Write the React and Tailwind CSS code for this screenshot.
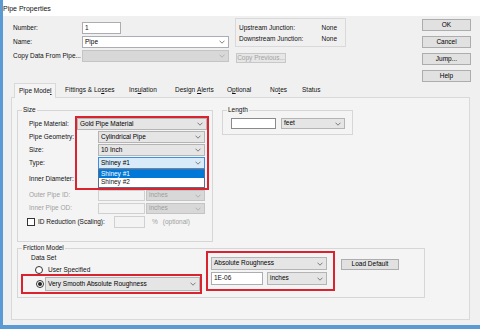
import React from "react";

const RED = "border-[#d9232e]";

function Chevron({ muted = false }) {
  return (
    <svg width="6" height="4" viewBox="0 0 6 4" className="ml-auto shrink-0">
      <polyline
        points="0.5,0.7 3,3.2 5.5,0.7"
        fill="none"
        stroke={muted ? "#a9a9a9" : "#606060"}
        strokeWidth="0.8"
      />
    </svg>
  );
}

function Combo({ value = "", tone = "gray", className = "" }) {
  const tones = {
    gray: "bg-[#e5e5e5] border-[#b4b4b4] text-black",
    white: "bg-white border-[#abadb3] text-black",
    focus: "bg-[#d9ebf9] border-[#3c8fdc] text-black",
    off: "bg-[#d8d8d8] border-[#c4c4c4] text-[#9d9d9d]",
  };
  return (
    <div
      className={`flex shrink-0 items-center border pl-[2px] pr-[3px] ${tones[tone]} ${className}`}
    >
      <span className="whitespace-nowrap">{value}</span>
      <Chevron muted={tone === "off"} />
    </div>
  );
}

function Field({ value = "", off = false, className = "" }) {
  return (
    <div
      className={`flex shrink-0 items-center border pl-[2px] ${off ? "bg-[#f3f3f3] border-[#d0d0d0]" : "bg-white"} ${className}`}
    >
      {value}
    </div>
  );
}

function Btn({ children, off = false, className = "" }) {
  return (
    <button
      type="button"
      className={`flex shrink-0 items-center justify-center border leading-none ${off ? "bg-[#e6e6e6] border-[#c8c8c8] text-[#a3a3a3]" : "bg-[#e1e1e1] border-[#adadad] text-black"} ${className}`}
    >
      {children}
    </button>
  );
}

function Radio({ on = false, className = "" }) {
  return (
    <span
      className={`flex h-[8px] w-[8px] shrink-0 items-center justify-center rounded-full border border-[#333] bg-white ${className}`}
    >
      {on && <span className="h-[4px] w-[4px] rounded-full bg-[#222]" />}
    </span>
  );
}

const tabs = [
  { w: "w-[66px] pl-[9px]", label: <>Fittings &amp; Lo<u>s</u>ses</> },
  { w: "w-[45px] pl-[7px]", label: <>Ins<u>u</u>lation</> },
  { w: "w-[54px] pl-[8px]", label: <>{"Design\u00a0"}<u>A</u>lerts</> },
  { w: "w-[41px] pl-[6px]", label: <>O<u>p</u>tional</> },
  { w: "w-[33px] pl-[8px]", label: <>No<u>t</u>es</> },
  { w: "w-[35px] pl-[7px]", label: <>Status</> },
];

export default function App() {
  return (
    <div className="flex h-[329px] w-[480px] flex-col overflow-hidden border-b-[4px] border-l-[3px] border-[#5b9bd5] bg-[#f0f0f0] font-['Liberation_Sans',Arial,sans-serif] text-[6.5px] leading-none text-[#111]">
      {/* title bar */}
      <div className="flex h-[16px] shrink-0 items-center bg-white text-[7px] text-[#111]">
        Pipe Properties
      </div>

      {/* header controls */}
      <div className="flex h-[66px] shrink-0">
        <div className="ml-[10px] flex w-[216px] flex-col gap-[2px] pt-[6px]">
          <div className="flex h-[12px] items-center">
            <span className="w-[69px]">Number:</span>
            <Field value="1" className="h-[12px] w-[39px] border-[#abadb3]" />
          </div>
          <div className="flex h-[12px] items-center">
            <span className="w-[69px]">Name:</span>
            <Combo value="Pipe" tone="white" className="h-[12px] w-[147px]" />
          </div>
          <div className="flex h-[12px] items-center">
            <span className="w-[69px] whitespace-nowrap">Copy Data From Pipe...</span>
            <Combo tone="off" className="h-[12px] w-[147px]" />
          </div>
        </div>

        <div className="ml-[6px] w-[111px] pt-[2px]">
          <div className="h-[29px] border border-[#d9d9d9] px-[3px] pt-[4px]">
            <div className="flex h-[11px] items-center justify-between pr-[5px]">
              <span>Upstream Junction:</span>
              <span>None</span>
            </div>
            <div className="flex h-[11px] items-center justify-between pr-[5px]">
              <span>Downstream Junction:</span>
              <span>None</span>
            </div>
          </div>
          <Btn off className="ml-[1px] mt-[6px] h-[10px] w-[50px]">
            Copy Previous...
          </Btn>
        </div>

        <div className="ml-[76px] flex w-[49px] flex-col gap-[5px] pt-[3px]">
          <Btn className="h-[12px] w-[49px]">OK</Btn>
          <Btn className="h-[12px] w-[49px]">Cancel</Btn>
          <Btn className="h-[12px] w-[49px]">Jump...</Btn>
          <Btn className="h-[12px] w-[49px]">Help</Btn>
        </div>
      </div>

      {/* tab strip */}
      <div className="relative z-10 ml-[8px] flex h-[15px] shrink-0 items-end">
        <div className="ml-[3px] mb-[-1px] flex h-[15px] w-[42px] items-center border-x border-t border-[#d9d9d9] bg-[#f4f4f4] pl-[4px]">
          Pipe Mode<u>l</u>
        </div>
        {tabs.map((t, i) => (
          <div key={i} className={`flex h-[13px] items-center whitespace-nowrap ${t.w}`}>
            {t.label}
          </div>
        ))}
      </div>

      {/* tab page */}
      <div className="ml-[8px] h-[223px] w-[459px] shrink-0 border border-[#d9d9d9] bg-[#f4f4f4] pl-[5px] pt-[8px]">
        <div className="flex items-start">
          <fieldset className="w-[196px] border border-[#d6d6d6] pb-[13px]">
            <legend className="ml-[4px] px-[1px] leading-[8px]">Size</legend>
            <div className="mt-[2px] flex">
              <div className="ml-[11px] w-[46px] whitespace-nowrap pt-[2px]">
                {["Pipe Material:", "Pipe Geometry:", "Size:", "Type:"].map((t) => (
                  <div key={t} className="flex h-[13px] items-center">
                    {t}
                  </div>
                ))}
                <div className="flex h-[18px] items-center">Inner Diameter:</div>
              </div>
              <div className={`w-[134px] border-2 ${RED}`}>
                <Combo value="Gold Pipe Material" className="h-[12px] w-[130px]" />
                <div className="ml-[21px] mt-[1px] flex flex-col gap-[1px]">
                  <Combo value="Cylindrical Pipe" className="h-[12px] w-[107px]" />
                  <Combo value="10 Inch" className="h-[12px] w-[107px]" />
                  <Combo value="Shiney #1" tone="focus" className="h-[12px] w-[107px]" />
                </div>
                <div className="ml-[21px] h-[19px] w-[107px] border border-[#5a6e88] bg-white">
                  <div className="flex h-[8px] items-center bg-[#0078d7] pl-[2px] text-white">
                    Shiney #1
                  </div>
                  <div className="flex h-[9px] items-center pl-[2px]">Shiney #2</div>
                </div>
              </div>
            </div>

            <div className="ml-[11px] flex h-[11px] items-center text-[#a0a0a0]">
              <span className="w-[69px]">Outer Pipe ID:</span>
              <Field off className="h-[11px] w-[47px]" />
              <Combo tone="off" value="inches" className="ml-[1px] h-[11px] w-[59px]" />
            </div>
            <div className="ml-[11px] mt-[2px] flex h-[11px] items-center text-[#a0a0a0]">
              <span className="w-[69px]">Inner Pipe OD:</span>
              <Field off className="h-[11px] w-[47px]" />
              <Combo tone="off" value="inches" className="ml-[1px] h-[11px] w-[59px]" />
            </div>
            <div className="ml-[9px] mt-[2px] flex h-[12px] items-center">
              <span className="h-[8px] w-[8px] shrink-0 border border-[#333] bg-white" />
              <span className="ml-[3px] w-[76px] whitespace-nowrap">ID Reduction (Scaling):</span>
              <Field off className="h-[12px] w-[31px]" />
              <span className="ml-[7px] text-[#a0a0a0]">%</span>
              <span className="ml-[5px] text-[#a0a0a0]">(optional)</span>
            </div>
          </fieldset>

          <fieldset className="ml-[9px] w-[131px] border border-[#d6d6d6] pb-[5px]">
            <legend className="ml-[4px] px-[1px] leading-[8px]">Length</legend>
            <div className="ml-[8px] mt-[4px] flex gap-[5px]">
              <Field className="h-[11px] w-[45px] border-[#8a8a8a]" />
              <Combo value="feet" className="h-[11px] w-[64px]" />
            </div>
          </fieldset>
        </div>

        <fieldset className="mt-[3px] w-[408px] border border-[#d6d6d6] pb-[3px]">
          <legend className="ml-[4px] px-[1px] leading-[6px]">Friction Model</legend>
          <div className="flex items-start">
            <div className="w-[184px]">
              <div className="ml-[13px] mt-[3px] flex h-[8px] items-center">Data Set</div>
              <div className="ml-[17px] mt-[4px] flex h-[8px] items-center gap-[5px]">
                <Radio />
                User Specified
              </div>
              <div className={`ml-[3px] flex h-[20px] w-[181px] items-center border-2 ${RED}`}>
                <Radio on className="ml-[13px]" />
                <Combo
                  value="Very Smooth Absolute Roughness"
                  className="ml-[1px] h-[14px] w-[155px]"
                />
              </div>
            </div>

            <div className={`ml-[4px] w-[129px] border-2 px-[3px] py-[4px] ${RED}`}>
              <Combo value="Absolute Roughness" className="h-[13px] w-[116px]" />
              <div className="mt-[2px] flex">
                <Field value="1E-06" className="h-[13px] w-[52px] border-[#abadb3]" />
                <Combo value="inches" className="ml-[4px] h-[13px] w-[60px]" />
              </div>
            </div>

            <Btn className="ml-[6px] mt-[8px] h-[11px] w-[58px]">Load Default</Btn>
          </div>
        </fieldset>
      </div>
    </div>
  );
}
